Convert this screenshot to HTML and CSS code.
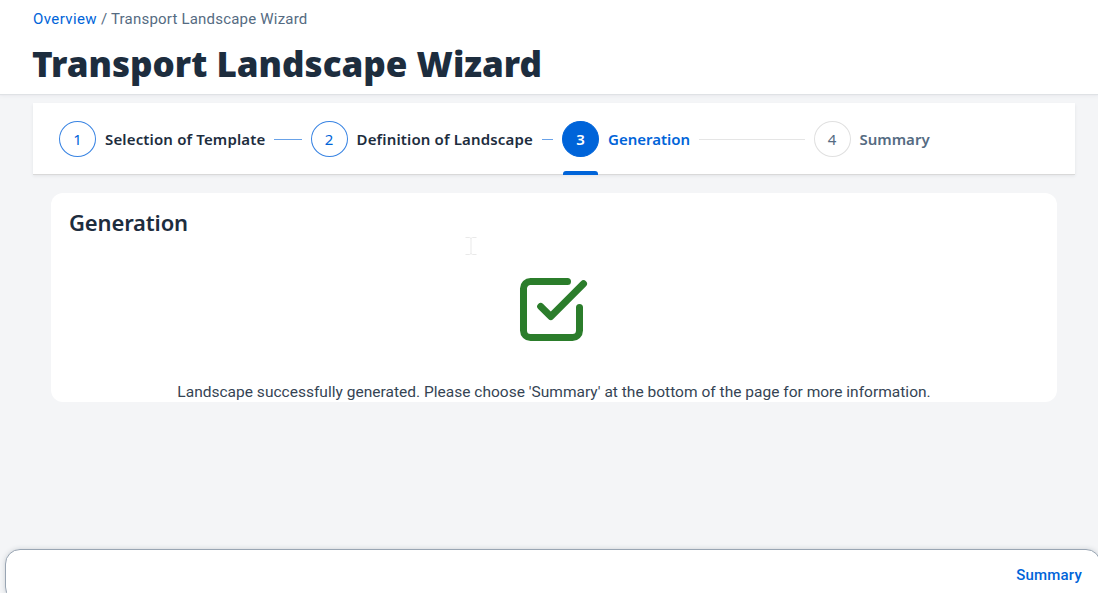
FILE: index.html
```html
<!DOCTYPE html>
<html lang="en">
<head>
<meta charset="utf-8">
<title>Transport Landscape Wizard</title>
<link rel="stylesheet" href="styles.css">
</head>
<body>
<div class="page">
  <header class="header">
    <nav class="breadcrumb"><a class="crumb-link" href="#">Overview</a><span class="crumb-current">/ Transport Landscape Wizard</span></nav>
    <h1 class="title">Transport Landscape Wizard</h1>
  </header>
  <ol class="steps">
    <li class="step"><span class="circle">1</span><span class="label label-1">Selection of Template</span><span class="line"></span></li>
    <li class="step"><span class="circle">2</span><span class="label label-2">Definition of Landscape</span><span class="line"></span></li>
    <li class="step active"><span class="circle">3</span><span class="label label-3">Generation</span><span class="line"></span></li>
    <li class="step pending"><span class="circle">4</span><span class="label label-4">Summary</span></li>
  </ol>
  <main class="card">
    <h2 class="card-title">Generation</h2>
    <svg class="success" viewBox="0 0 70 66" fill="none" stroke="#2b7d2b" stroke-width="7" stroke-linecap="round" stroke-linejoin="round">
      <path d="M48.500 4.500H11.500a7 7 0 0 0-7 7v42a7 7 0 0 0 7 7h42a7 7 0 0 0 7-7V30.500"/>
      <path d="M21.700 29.500 31.800 39.500 64.500 6.700"/>
    </svg>
    <p class="message">Landscape successfully generated. Please choose 'Summary' at the bottom of the page for more information.</p>
    <svg class="cursor" viewBox="0 0 12 20" fill="none" stroke="#e9e9e9"><path d="M.5 1.500h4l1.500 1 1.500-1h4M6 2.500v15M.5 18.500h4l1.500-1 1.500 1h4"/></svg>
  </main>
  <footer class="footer"><button class="summary-button" type="button">Summary</button></footer>
</div>
</body>
</html>
```
FILE: styles.css
```css
* { box-sizing: border-box; }
body { margin: 0; overflow: hidden; background: #f4f5f7; color: #1d2d3e; font-family: Roboto, "Noto Sans", sans-serif; }
.page { height: 593px; display: flex; flex-direction: column; }
.header { flex: none; height: 94px; padding: 8px 33px 0; background: #fff; box-shadow: 0 1px 1px #dfe2e5, 0 2px 4px #e9ebee; }
.breadcrumb { display: flex; gap: 4px; font-size: 15px; line-height: 23px; white-space: nowrap; }
.crumb-link { color: #0064d9; text-decoration: none; letter-spacing: .4px; }
.crumb-current { color: #556b82; letter-spacing: .2px; }
.title { margin: 9px 0 0 -1px; font-family: "Noto Sans", sans-serif; font-size: 35px; font-weight: 900; line-height: 48px; white-space: nowrap; }
.steps { flex: none; list-style: none; display: grid; grid-template-columns: repeat(4, 251.500px); width: 1042px; height: 71px; margin: 9px 0 0 33px; padding: 0 0 0 26px; background: #fff; box-shadow: 0 1px 0 #d9d9d9, 0 2px 3px #e2e4e7; }
.step { position: relative; display: flex; align-items: center; gap: 9px; height: 72px; padding-right: 9px; color: #1d2d3e; white-space: nowrap; }
.circle { flex: none; display: grid; place-items: center; width: 37px; height: 36px; border: 1px solid #3984e3; border-radius: 50%; color: #0064d9; font-family: "Noto Sans", sans-serif; font-size: 15px; }
.label { font-family: "Noto Sans", sans-serif; font-size: 15px; font-weight: 600; }
.label-1, .label-2 { letter-spacing: .15px; }
.line { flex: 1; height: 1px; background: #69a2e8; }
.active .circle { background: #0064d9; border-color: #0064d9; color: #fff; font-weight: 600; }
.active .label { color: #0064d9; }
.active .line { background: #e5e5e5; }
.active::after { content: ""; position: absolute; left: 1px; bottom: 0; width: 35px; height: 4px; border-radius: 3px 3px 0 0; background: #0064d9; }
.pending .circle { border-color: #e0e0e0; color: #556b82; }
.pending .label { color: #556b82; }
.card { position: relative; flex: none; display: flex; flex-direction: column; align-items: center; width: 1006px; height: 209px; margin: 19px 0 0 51px; border-radius: 12px; background: #fff; }
.card-title { align-self: stretch; margin: 13px 18px 0; font-size: 22px; font-family: "Noto Sans", sans-serif; font-weight: 600; line-height: 32px; letter-spacing: -.15px; }
.success { flex: none; width: 70px; height: 66px; margin-top: 39px; }
.message { margin: 38px 0 0; font-size: 15.500px; line-height: 22px; letter-spacing: .015px; color: #354454; white-space: nowrap; }
.cursor { position: absolute; left: 414px; top: 43px; width: 12px; height: 20px; }
.footer { flex: none; display: flex; align-items: center; justify-content: flex-end; width: 1096px; height: 53px; margin: auto 0 -9px 5px; padding: 0 18px 2px 0; border: 1px solid #99a5b3; border-radius: 15px; background: #fff; box-shadow: 0 0 5px #cbd0d5; }
.summary-button { border: 0; padding: 0; background: none; color: #0064d9; font: 500 15px/20px Roboto, sans-serif; letter-spacing: .2px; }
```
